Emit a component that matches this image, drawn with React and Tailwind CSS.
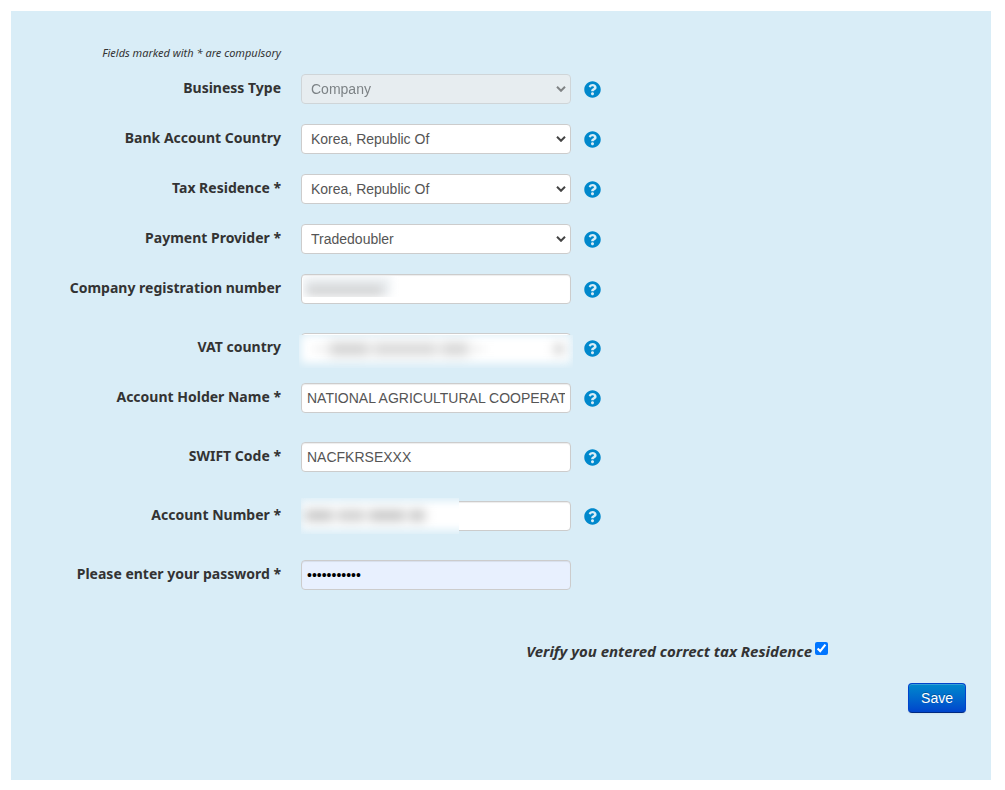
import React, { useState } from 'react'
import { FaQuestionCircle } from 'react-icons/fa'

const fieldBase = 'block w-full h-[30px] rounded-[4px] border border-[#cccccc] text-sm leading-5 font-["Liberation_Sans",Arial,sans-serif]'

function Help({ label }) {
  return (
    <button type="button" aria-label={`Help: ${label}`} className="ml-3 p-px text-[#0088cc]">
      <FaQuestionCircle size={17} />
    </button>
  )
}

function Row({ id, label, help = true, roomy, children }) {
  return (
    <div className={`flex items-center ${roomy ? 'mb-[29px]' : 'mb-5'}`}>
      <label htmlFor={id} className="w-[270px] shrink-0 mr-5 pb-[2px] text-right text-sm leading-5 font-bold">{label}</label>
      <div className="grid w-[270px]">{children}</div>
      {help && <Help label={label} />}
    </div>
  )
}

function SelectField({ id, value, disabled }) {
  return (
    <>
      <select id={id} disabled={disabled} defaultValue={value}
        className={`${fieldBase} col-start-1 row-start-1 appearance-none pl-[9px] pr-6 bg-white text-[#555555] disabled:bg-[#eeeeee] disabled:opacity-70`}>
        <option>{value}</option>
      </select>
      <svg viewBox="0 0 10 6" fill="none" stroke={disabled ? '#808385' : '#444444'} strokeWidth="2"
        className="pointer-events-none z-10 col-start-1 row-start-1 self-center justify-self-end mr-[5px] w-[10px] h-[6px]">
        <path d="M1 0.8 L5 4.8 L9 0.8" />
      </svg>
    </>
  )
}

function TextField({ id, type = 'text', value = '', tone = 'bg-white text-[#555555]' }) {
  const [text, setText] = useState(value)
  return (
    <input id={id} type={type} value={text} onChange={e => setText(e.target.value)}
      className={`${fieldBase} ${tone} col-start-1 row-start-1 px-[5px] shadow-[inset_0_1px_1px_rgba(0,0,0,0.075)]`} />
  )
}

export default function App() {
  const [verified, setVerified] = useState(true)

  return (
    <main className='pt-[11px] pl-[11px] pr-[14px] pb-[10px] bg-white text-[#333333] font-["Noto_Sans","Open_Sans",sans-serif]'>
      <form onSubmit={e => e.preventDefault()} className="bg-[#d9edf7] pt-8 pb-[67px]">
        <p className="w-[270px] mb-[11px] text-right text-[11px] leading-5 italic whitespace-nowrap">Fields marked with * are compulsory</p>

        <Row id="businessType" label="Business Type">
          <SelectField id="businessType" value="Company" disabled />
        </Row>
        <Row id="bankCountry" label="Bank Account Country">
          <SelectField id="bankCountry" value="Korea, Republic Of" />
        </Row>
        <Row id="taxResidence" label="Tax Residence *">
          <SelectField id="taxResidence" value="Korea, Republic Of" />
        </Row>
        <Row id="provider" label="Payment Provider *">
          <SelectField id="provider" value="Tradedoubler" />
        </Row>

        {/* masked values are soft grey smudges over the field */}
        <Row id="regNumber" label="Company registration number" roomy>
          <TextField id="regNumber" />
          <div className="pointer-events-none z-10 col-start-1 row-start-1 mt-[2px] ml-[2px] w-24 h-[21px] overflow-hidden bg-white">
            <div className="flex items-center w-[88px] h-5 pt-2 pl-1 bg-[#edf1f4] blur-[4px]">
              <span className="w-[76px] h-[9px] bg-[#cccccc] blur-[3px]" />
            </div>
          </div>
        </Row>

        <Row id="vatCountry" label="VAT country">
          <select id="vatCountry" defaultValue="" className={`${fieldBase} col-start-1 row-start-1 appearance-none bg-white text-[#555555]`}>
            <option value=""></option>
          </select>
          <div className="pointer-events-none z-10 col-start-1 row-start-1 h-[33px] mt-[2px] -mb-[5px] -mx-[2px] overflow-hidden bg-[#d9edf7]">
            <div className="flex items-center gap-1 h-7 mx-[2px] pl-3 pr-2 rounded bg-white blur-[4px]">
              <span className="w-3 h-[2px] bg-[#dddddd]" />
              <span className="w-10 h-[10px] bg-[#c4c4c4] blur-[4px]" />
              <span className="w-16 h-[10px] bg-[#cccccc] blur-[4px]" />
              <span className="w-7 h-[10px] bg-[#c8c8c8] blur-[4px]" />
              <span className="w-3 h-[2px] bg-[#dddddd]" />
              <span className="ml-auto w-2 h-2 bg-[#b8b8b8] blur-[3px]" />
            </div>
          </div>
        </Row>

        <Row id="holder" label="Account Holder Name *" roomy>
          <TextField id="holder" value="NATIONAL AGRICULTURAL COOPERATIVE FEDERATION" />
        </Row>
        <Row id="swift" label="SWIFT Code *" roomy>
          <TextField id="swift" value="NACFKRSEXXX" />
        </Row>

        <Row id="accountNumber" label="Account Number *" roomy>
          <TextField id="accountNumber" />
          <div className="pointer-events-none z-10 col-start-1 row-start-1 w-[158px] h-9 -my-[3px] py-[3px] overflow-hidden bg-[#d9edf7]">
            <div className="flex items-center gap-1 w-[180px] h-[29px] pl-1 bg-white blur-[4px]">
              <span className="w-7 h-[11px] bg-[#c4c4c4] blur-[3px]" />
              <span className="w-7 h-[11px] bg-[#cccccc] blur-[3px]" />
              <span className="w-9 h-[11px] bg-[#c4c4c4] blur-[3px]" />
              <span className="w-4 h-[11px] bg-[#c4c4c4] blur-[3px]" />
            </div>
          </div>
        </Row>

        <Row id="password" label="Please enter your password *" help={false} roomy>
          <TextField id="password" type="password" value="abcdefghijk" tone="bg-[#e8f0fe] text-black" />
        </Row>

        <div className="flex justify-end items-start mt-12 pr-[163px]">
          <label htmlFor="verify" className="mr-[3px] pt-[3px] text-[15px] leading-5 font-bold italic">Verify you entered correct tax Residence</label>
          <input id="verify" type="checkbox" checked={verified} onChange={e => setVerified(e.target.checked)}
            className="mt-1 w-[13px] h-[13px] accent-[#0075ff]" />
        </div>

        <div className="flex justify-end mt-[22px] pr-[25px]">
          <button type="submit"
            className='h-[30px] px-3 rounded-[4px] border border-[#0044cc] border-b-[#002a80] bg-linear-to-b from-[#0088cc] to-[#0044cc] text-sm leading-5 text-white font-["Liberation_Sans",Arial,sans-serif] [text-shadow:0_-1px_0_rgba(0,0,0,0.25)] shadow-[inset_0_1px_0_rgba(255,255,255,0.2),0_1px_2px_rgba(0,0,0,0.05)]'>
            Save
          </button>
        </div>
      </form>
    </main>
  )
}
